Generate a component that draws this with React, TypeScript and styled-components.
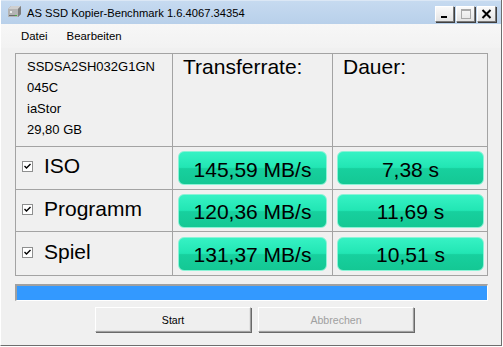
import React, { FC } from 'react';
import styled, { createGlobalStyle } from 'styled-components';

const GlobalStyle = createGlobalStyle`
  html, body {
    margin: 0;
    padding: 0;
    background: #ffffff;
  }
  body {
    font-family: "Liberation Sans", Arial, sans-serif;
  }
`;

const Window = styled.div`
  width: 500px;
  height: 345px;
  display: flex;
  flex-direction: column;
  background: #f0f0f0;
  border-left: 1px solid #ffffff;
  border-right: 1px solid #6e6e6e;
  border-bottom: 1px solid #6e6e6e;
  overflow: hidden;
`;

const TitleBar = styled.div`
  height: 24px;
  display: flex;
  align-items: center;
  padding: 0 4px 0 5px;
  background: linear-gradient(#c6daf0, #b8d0ea);
  border-top: 1px solid #dbe7f5;
  box-sizing: border-box;
`;

const TitleText = styled.span`
  margin-left: 4px;
  font-size: 11.2px;
  color: #000000;
  flex: 1;
`;

const WinButtons = styled.div`
  display: flex;
  gap: 2px;
  margin-top: 2px;
  margin-right: 1px;
`;

const WinButton = styled.div`
  width: 19px;
  height: 16px;
  box-sizing: border-box;
  display: flex;
  align-items: center;
  justify-content: center;
  background: linear-gradient(#fafafa, #e4e4e4);
  border-top: 1px solid #ffffff;
  border-left: 1px solid #ffffff;
  border-right: 1px solid #7a7a7a;
  border-bottom: 1px solid #7a7a7a;
  box-shadow: 1px 1px 0 #404040;
`;

const MenuBar = styled.div`
  height: 24px;
  display: flex;
  align-items: center;
  padding-left: 20px;
  gap: 19px;
  font-size: 11.4px;
  background: linear-gradient(#f7f7f7, #f2f2f2);
`;

const MenuItem = styled.span`
  color: #000000;
`;

const Client = styled.div`
  padding: 5px 12px 0 14px;
  display: flex;
  flex-direction: column;
`;

const Table = styled.div`
  display: grid;
  grid-template-columns: 156px 159px 154px;
  grid-template-rows: 92px 42px 41px 43px;
  gap: 1px;
  background: #a3a3a3;
  border: 1px solid #a3a3a3;
  width: max-content;
`;

const Cell = styled.div`
  background: #f0f0f0;
  display: flex;
  align-items: center;
  box-sizing: border-box;
`;

const InfoCell = styled(Cell)`
  flex-direction: column;
  align-items: flex-start;
  padding: 2px 0 0 11px;
  font-size: 13px;
  line-height: 21px;
`;

const HeadCell = styled(Cell)`
  align-items: flex-start;
  padding: 1px 0 0 10px;
  font-size: 21px;
`;

const LabelCell = styled(Cell)`
  padding: 0 0 4px 6px;
  gap: 11px;
  font-size: 21px;
`;

const ResultCell = styled(Cell)<{ $left: number; $right: number }>`
  padding: 0 ${({ $right }) => $right}px 0 ${({ $left }) => $left}px;
`;

const ResultBox = styled.div`
  flex: 1;
  height: 34px;
  box-sizing: border-box;
  border-radius: 6px;
  border: 1px solid #8af3d6;
  background: linear-gradient(#36f2c4 0%, #22e6b4 48%, #17d09e 52%, #14c894 100%);
  display: flex;
  align-items: center;
  justify-content: center;
  padding-top: 3px;
  font-size: 21px;
  color: #000000;
`;

const CheckBox = styled.div`
  width: 11px;
  height: 11px;
  box-sizing: border-box;
  background: #ffffff;
  border: 1px solid #8e8f8f;
  display: flex;
  align-items: center;
  justify-content: center;
  margin-top: 1px;
`;

const Progress = styled.div`
  margin-top: 8px;
  width: 473px;
  height: 17px;
  box-sizing: border-box;
  border-top: 2px solid #a0a0a0;
  border-left: 2px solid #a0a0a0;
  border-right: 1px solid #ffffff;
  border-bottom: 1px solid #ffffff;
  background: #3399ff;
`;

const ButtonRow = styled.div`
  margin-top: 6px;
  width: 473px;
  display: flex;
  gap: 7px;
  padding-left: 80px;
  box-sizing: border-box;
`;

const Button = styled.div<{ $disabled?: boolean }>`
  width: 156px;
  height: 25px;
  box-sizing: border-box;
  display: flex;
  align-items: center;
  justify-content: center;
  font-size: 10.6px;
  color: ${({ $disabled }) => ($disabled ? '#a0a0a0' : '#000000')};
  background: #efefef;
  border-top: 1px solid #ffffff;
  border-left: 1px solid #ffffff;
  border-right: 1px solid #a0a0a0;
  border-bottom: 1px solid #a0a0a0;
  box-shadow: 1px 1px 0 #696969, inset -1px -1px 0 #e3e3e3;
`;

const DriveIcon: FC = () => (
  <svg width="17" height="15" viewBox="0 0 17 15">
    <path d="M2 4 L5 1 H15 L15 9 L12 12 H2 Z" fill="#9a9a9a" />
    <path d="M2 4 L5 1 H15 L12 4 Z" fill="#cfcfcf" />
    <rect x="2" y="4" width="10" height="8" fill="#b4b4b4" />
    <path d="M12 4 L15 1 V9 L12 12 Z" fill="#7d7d7d" />
    <rect x="3" y="10" width="8" height="1" fill="#6a6a6a" />
    <rect x="4" y="6" width="2" height="2" fill="#ffffff" opacity="0.7" />
    <rect x="9" y="10" width="2" height="1" fill="#3fb33f" />
  </svg>
);

const Check: FC = () => (
  <svg width="9" height="9" viewBox="0 0 9 9">
    <path d="M1.5 4 L3.5 6 L7.5 2" stroke="#000" strokeWidth="1.4" fill="none" />
  </svg>
);

const tests = [
  { name: 'ISO', rate: '145,59 MB/s', time: '7,38 s' },
  { name: 'Programm', rate: '120,36 MB/s', time: '11,69 s' },
  { name: 'Spiel', rate: '131,37 MB/s', time: '10,51 s' },
];

const App: FC = () => (
  <>
    <GlobalStyle />
    <Window>
      <TitleBar>
        <DriveIcon />
        <TitleText>AS SSD Kopier-Benchmark 1.6.4067.34354</TitleText>
        <WinButtons>
          <WinButton>
            <svg width="11" height="10" viewBox="0 0 11 10">
              <rect x="2" y="7" width="6" height="2" fill="#000" />
            </svg>
          </WinButton>
          <WinButton>
            <svg width="11" height="10" viewBox="0 0 11 10">
              <rect x="1.5" y="0.5" width="9" height="9" fill="none" stroke="#a8a8a8" />
              <rect x="1" y="0" width="10" height="2" fill="#a8a8a8" />
            </svg>
          </WinButton>
          <WinButton>
            <svg width="11" height="10" viewBox="0 0 11 10">
              <path d="M1.5 1 L9.5 9 M9.5 1 L1.5 9" stroke="#000" strokeWidth="2" />
            </svg>
          </WinButton>
        </WinButtons>
      </TitleBar>
      <MenuBar>
        <MenuItem>Datei</MenuItem>
        <MenuItem>Bearbeiten</MenuItem>
      </MenuBar>
      <Client>
        <Table>
          <InfoCell>
            <span>SSDSA2SH032G1GN</span>
            <span>045C</span>
            <span>iaStor</span>
            <span>29,80 GB</span>
          </InfoCell>
          <HeadCell>Transferrate:</HeadCell>
          <HeadCell>Dauer:</HeadCell>
          {tests.map((t) => (
            <React.Fragment key={t.name}>
              <LabelCell>
                <CheckBox>
                  <Check />
                </CheckBox>
                <span>{t.name}</span>
              </LabelCell>
              <ResultCell $left={5} $right={5}>
                <ResultBox>{t.rate}</ResultBox>
              </ResultCell>
              <ResultCell $left={4} $right={3}>
                <ResultBox>{t.time}</ResultBox>
              </ResultCell>
            </React.Fragment>
          ))}
        </Table>
        <Progress />
        <ButtonRow>
          <Button>Start</Button>
          <Button $disabled>Abbrechen</Button>
        </ButtonRow>
      </Client>
    </Window>
  </>
);

export default App;
